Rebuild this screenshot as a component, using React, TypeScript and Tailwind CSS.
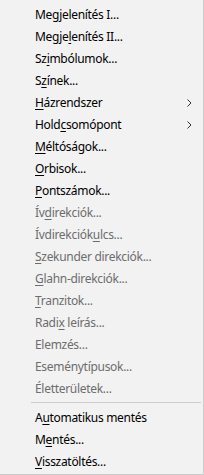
import React from 'react';

type Item = {
  label: string;
  key?: number; // index of the mnemonic letter
  disabled?: boolean;
  submenu?: boolean;
};

const topItems: Item[] = [
  { label: 'Megjelenítés I...', key: 3 },
  { label: 'Megjelenítés II...', key: 5 },
  { label: 'Szimbólumok...', key: 2 },
  { label: 'Színek...', key: 1 },
  { label: 'Házrendszer', key: 0, submenu: true },
  { label: 'Holdcsomópont', key: 4, submenu: true },
  { label: 'Méltóságok...', key: 0 },
  { label: 'Orbisok...', key: 0 },
  { label: 'Pontszámok...', key: 0 },
  { label: 'Ívdirekciók...', key: 2, disabled: true },
  { label: 'Ívdirekciókulcs...', key: 11, disabled: true },
  { label: 'Szekunder direkciók...', key: 0, disabled: true },
  { label: 'Glahn-direkciók...', key: 0, disabled: true },
  { label: 'Tranzitok...', key: 0, disabled: true },
  { label: 'Radix leírás...', key: 4, disabled: true },
  { label: 'Elemzés...', disabled: true },
  { label: 'Eseménytípusok...', disabled: true },
  { label: 'Életterületek...', disabled: true },
];

const bottomItems: Item[] = [
  { label: 'Automatikus mentés', key: 1 },
  { label: 'Mentés...', key: 1 },
  { label: 'Visszatöltés...', key: 0 },
];

function Label({ label, k }: { label: string; k?: number }) {
  if (k === undefined) return <span>{label}</span>;
  return (
    <span>
      {label.slice(0, k)}
      <span className="underline underline-offset-[2px] decoration-1">{label[k]}</span>
      {label.slice(k + 1)}
    </span>
  );
}

function Chevron() {
  return (
    <svg width="5" height="8" viewBox="0 0 5 8" className="absolute right-[11px] top-[7px]">
      <path d="M0.5 0.5 L4 4 L0.5 7.5" fill="none" stroke="#333" strokeWidth="1" />
    </svg>
  );
}

function Row({ item }: { item: Item }) {
  return (
    <div
      className={
        'relative h-[22px] pl-[35px] flex items-center whitespace-nowrap ' +
        (item.disabled ? 'text-[#6d6d6d]' : 'text-black')
      }
    >
      <Label label={item.label} k={item.key} />
      {item.submenu && <Chevron />}
    </div>
  );
}

export default function App() {
  return (
    <div
      className="w-[204px] h-[475px] bg-[#f2f2f2] border-r border-b border-[#cccccc] pt-[4px] text-[12px] leading-[16px] tracking-[-0.3px]"
      style={{ fontFamily: '"Noto Sans", "Open Sans", sans-serif' }}
    >
      {topItems.map(item => (
        <Row key={item.label} item={item} />
      ))}
      <div className="py-[2px] pl-[31px] pr-[2px]">
        <div className="h-px bg-[#cccccc]" />
      </div>
      <div className="pt-[2px]">
        {bottomItems.map(item => (
          <Row key={item.label} item={item} />
        ))}
      </div>
    </div>
  );
}
